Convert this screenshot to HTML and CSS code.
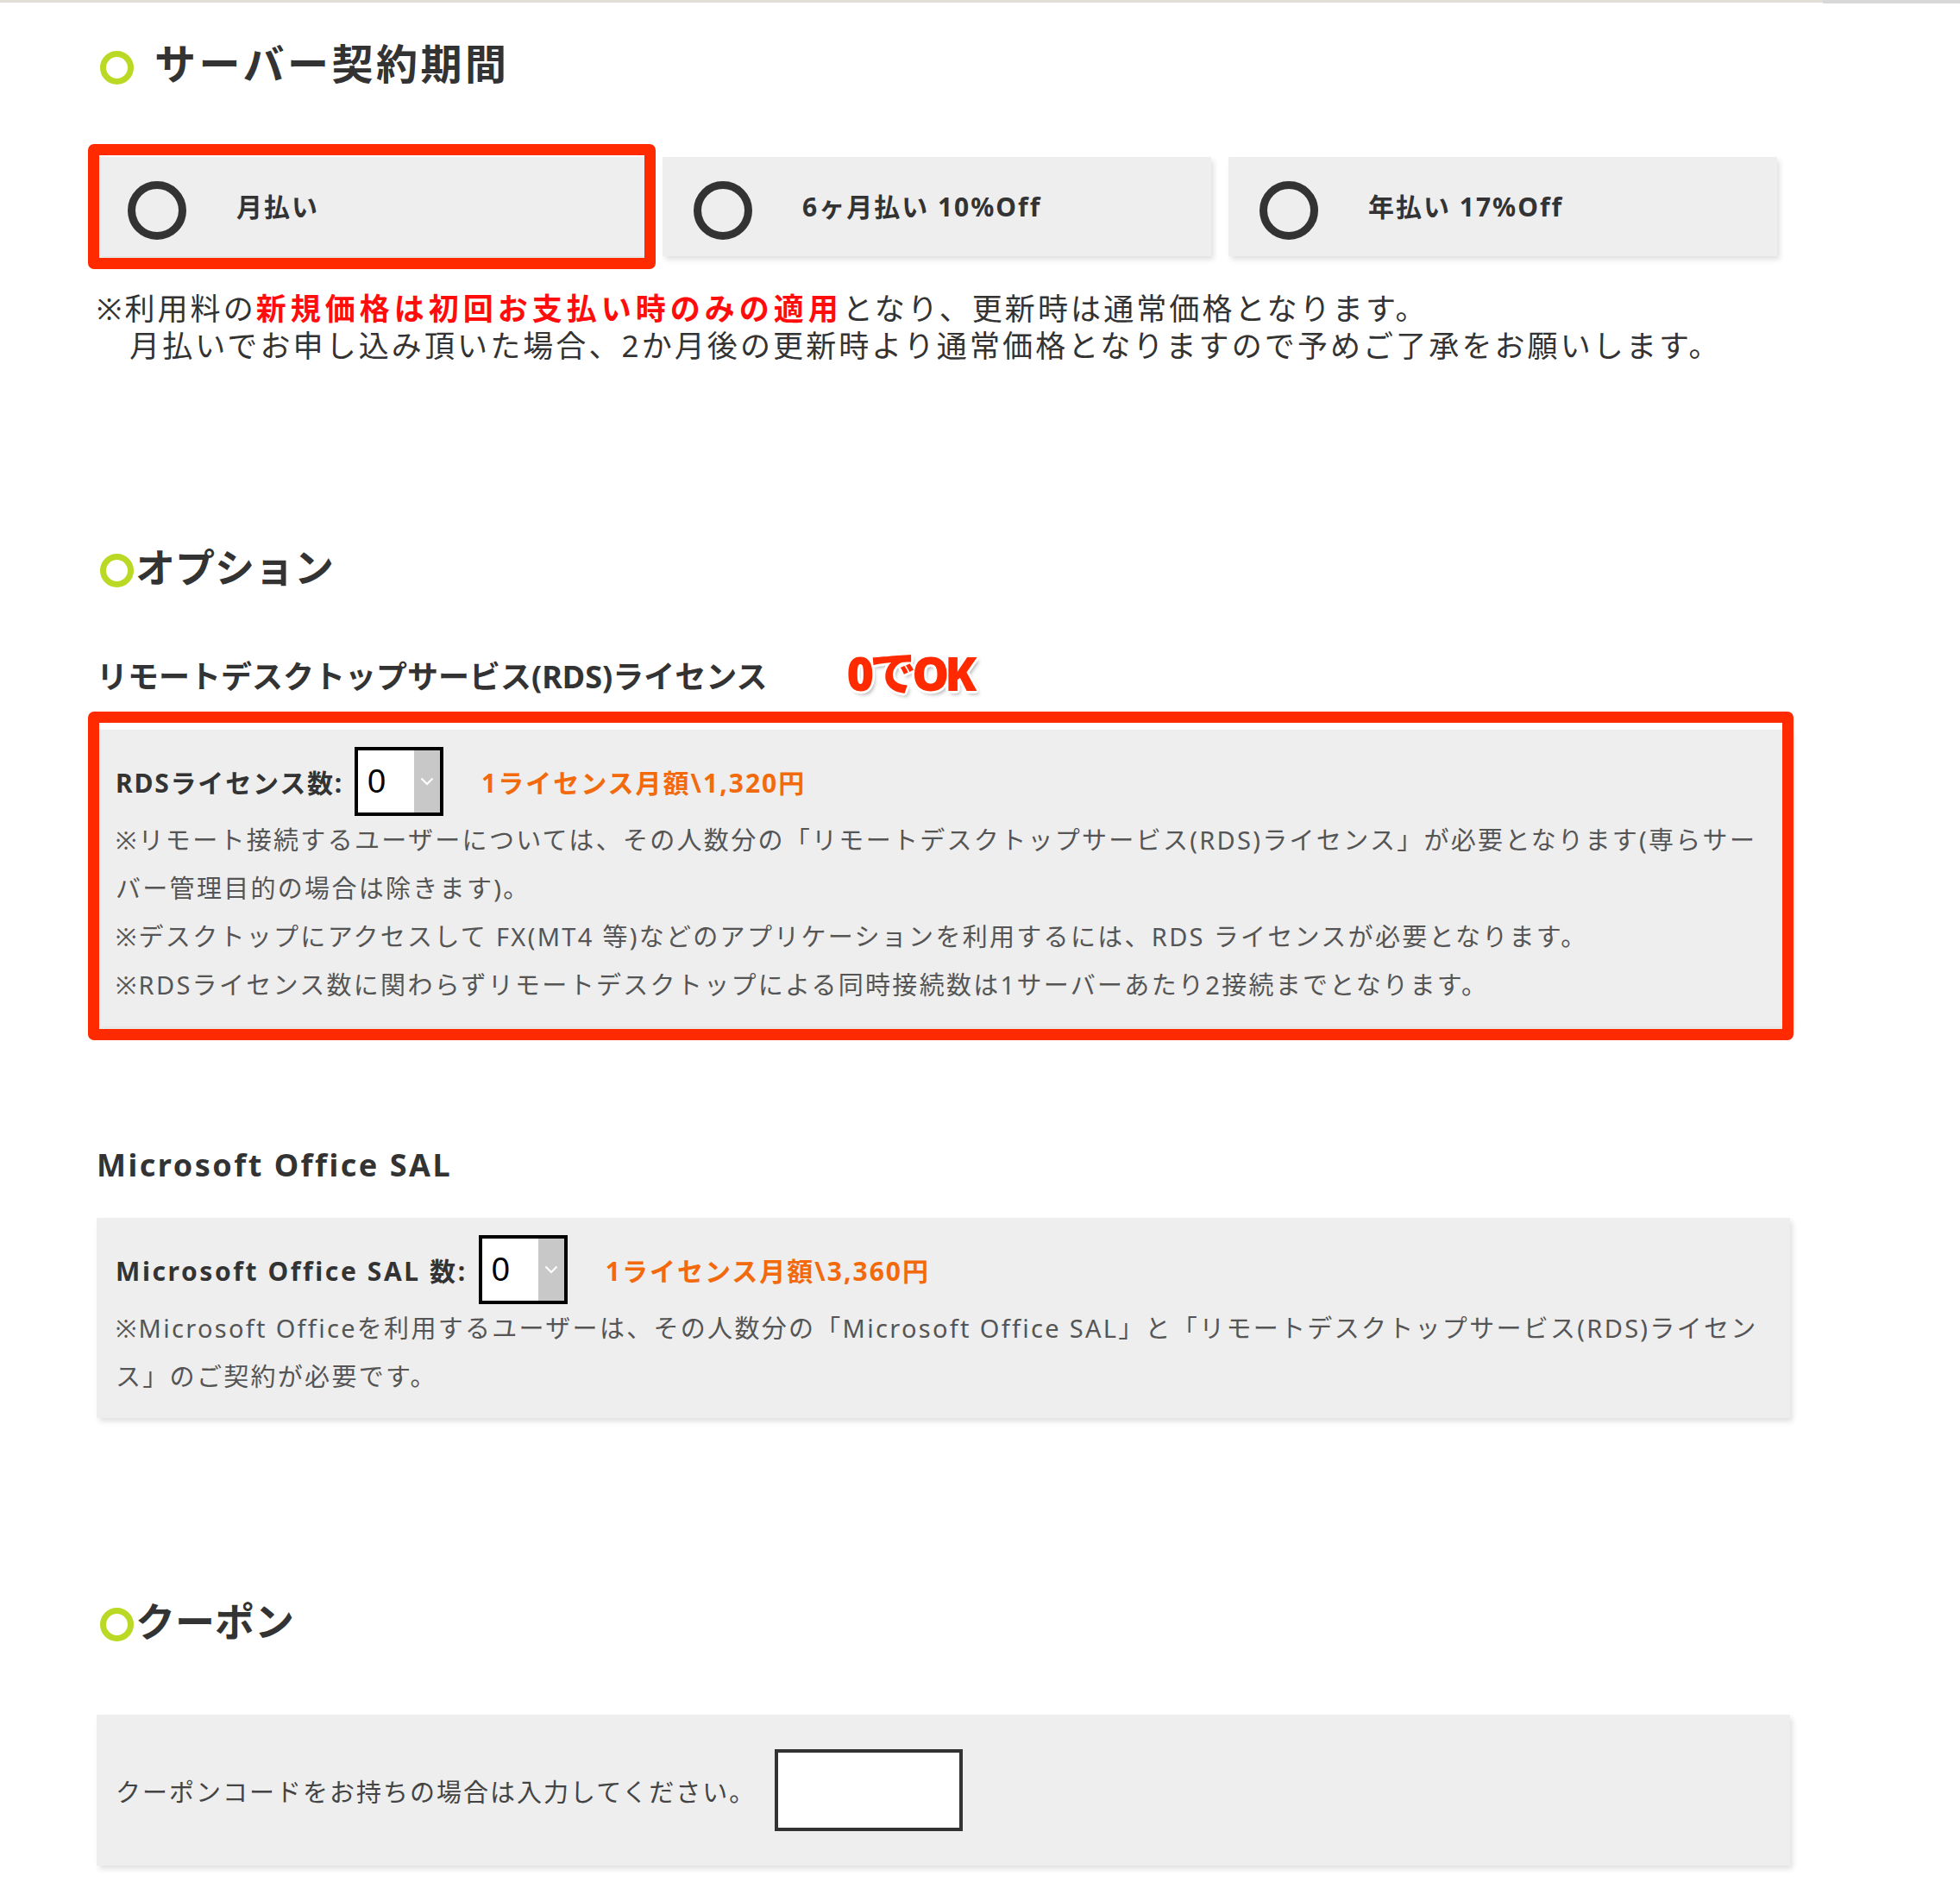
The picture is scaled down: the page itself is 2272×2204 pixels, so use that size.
FILE: index.html
```html
<!DOCTYPE html>
<html lang="ja">
<head>
    <meta charset="UTF-8">
    <meta name="viewport" content="width=device-width, initial-scale=1.0">
    <title>サーバーお申し込み</title>
    <link rel="stylesheet" href="styles.css">
</head>
<body>
    <div class="topbar"><div class="topbar-line"></div><div class="topbar-tab"></div></div>
    <div class="wrap">
        <h2 class="sec-title first"><span class="ring"></span>サーバー契約期間</h2>
        <div class="plans">
            <label class="plan">
                <span class="radio"></span>
                <span class="plan-name">月払い</span>
                <span class="mark mark-plan"></span>
            </label>
            <label class="plan">
                <span class="radio"></span>
                <span class="plan-name">6ヶ月払い 10%Off</span>
            </label>
            <label class="plan">
                <span class="radio"></span>
                <span class="plan-name">年払い 17%Off</span>
            </label>
        </div>
        <p class="notice">※利用料の<strong>新規価格は初回お支払い時のみの適用</strong>となり、更新時は通常価格となります。<br>　月払いでお申し込み頂いた場合、2か月後の更新時より通常価格となりますので予めご了承をお願いします。</p>

        <h2 class="sec-title"><span class="ring"></span>オプション</h2>
        <div class="opt-head">
            <h3 class="opt-title">リモートデスクトップサービス(RDS)ライセンス</h3>
            <span class="ok-note">0でOK</span>
        </div>
        <div class="opt-box">
            <div class="opt-row">
                <span class="opt-label">RDSライセンス数:</span>
                <div class="num-select">
                    <select><option>0</option><option>1</option><option>2</option></select>
                    <span class="num-arrow"><svg width="16" height="10" viewBox="0 0 16 10"><polyline points="1.5,1.5 8,8 14.5,1.5" fill="none" stroke="#fff" stroke-width="2.2"/></svg></span>
                </div>
                <span class="opt-price">1ライセンス月額\1,320円</span>
            </div>
            <p class="opt-note">※リモート接続するユーザーについては、その人数分の「リモートデスクトップサービス(RDS)ライセンス」が必要となります(専らサー<br>バー管理目的の場合は除きます)。</p>
            <p class="opt-note">※デスクトップにアクセスして FX(MT4 等)などのアプリケーションを利用するには、RDS ライセンスが必要となります。</p>
            <p class="opt-note">※RDSライセンス数に関わらずリモートデスクトップによる同時接続数は1サーバーあたり2接続までとなります。</p>
            <span class="mark mark-box"></span>
        </div>

        <h3 class="opt-title latin">Microsoft Office SAL</h3>
        <div class="opt-box">
            <div class="opt-row">
                <span class="opt-label wide">Microsoft Office SAL 数:</span>
                <div class="num-select">
                    <select><option>0</option><option>1</option><option>2</option></select>
                    <span class="num-arrow"><svg width="16" height="10" viewBox="0 0 16 10"><polyline points="1.5,1.5 8,8 14.5,1.5" fill="none" stroke="#fff" stroke-width="2.2"/></svg></span>
                </div>
                <span class="opt-price">1ライセンス月額\3,360円</span>
            </div>
            <p class="opt-note">※Microsoft Officeを利用するユーザーは、その人数分の「Microsoft Office SAL」と「リモートデスクトップサービス(RDS)ライセン<br>ス」のご契約が必要です。</p>
        </div>

        <h2 class="sec-title"><span class="ring"></span>クーポン</h2>
        <div class="coupon-box">
            <span class="coupon-text">クーポンコードをお持ちの場合は入力してください。</span>
            <input type="text" class="coupon-input">
        </div>
    </div>
</body>
</html>
```

FILE: styles.css
```css
body {
    margin: 0;
    background-color: #fff;
    color: #333;
    font-family: "Noto Sans", "Noto Sans CJK JP", sans-serif;
}
.topbar {
    display: flex;
    height: 4px;
}
.topbar-line {
    flex: 1;
    height: 3px;
    background-color: #e0ded6;
}
.topbar-tab {
    width: 159px;
    background-color: #d8d8d8;
}
.wrap {
    width: 1963px;
    padding: 0 0 40px 112px;
}

/* section headings */
.sec-title {
    display: flex;
    align-items: center;
    height: 60px;
    margin: 205px 0 0 4px;
    font-size: 46px;
    line-height: 60px;
    font-weight: 700;
    color: #333;
}
.sec-title.first {
    margin-top: 40px;
    font-size: 48px;
    letter-spacing: 3.5px;
}
.ring {
    flex-shrink: 0;
    width: 39px;
    height: 39px;
    box-sizing: border-box;
    border: 7px solid #bad924;
    border-radius: 50%;
    margin: 8px 2px 0 0;
}
.sec-title.first .ring {
    margin-right: 24px;
}

/* contract period */
.plans {
    display: flex;
    gap: 20px;
    margin-top: 78px;
}
.plan {
    position: relative;
    display: flex;
    align-items: center;
    width: 636px;
    height: 115px;
    box-sizing: border-box;
    padding-left: 36px;
    background-color: #eee;
    box-shadow: 3px 4px 6px rgba(0, 0, 0, 0.12);
}
.radio {
    width: 68px;
    height: 68px;
    box-sizing: border-box;
    border: 9px solid #333;
    border-radius: 50%;
    margin: 9px 58px 0 0;
}
.plan-name {
    font-size: 30px;
    font-weight: 700;
    letter-spacing: 2px;
    margin-top: -3px;
}
.notice {
    margin: 39px 0 0;
    font-size: 35px;
    line-height: 43px;
    letter-spacing: 3.1px;
    color: #333;
}
.notice strong {
    color: #ff0d0d;
    font-weight: 700;
    letter-spacing: 5px;
}

/* options */
.opt-head {
    display: flex;
    align-items: center;
    margin-top: 73px;
}
.opt-title {
    margin: 0;
    font-size: 36px;
    line-height: 50px;
    font-weight: 700;
    color: #333;
}
.opt-title.latin {
    margin-top: 136px;
    letter-spacing: 2.5px;
}
.ok-note {
    margin: -10px 0 0 92px;
    font-size: 54px;
    line-height: 50px;
    font-weight: 900;
    letter-spacing: -5px;
    color: #ff2a00;
    text-shadow: 3px 0 0 #fff, -3px 0 0 #fff, 0 3px 0 #fff, 0 -3px 0 #fff,
        2px 2px 0 #fff, -2px 2px 0 #fff, 2px -2px 0 #fff, -2px -2px 0 #fff,
        3px 4px 4px rgba(0, 0, 0, 0.3);
}
.opt-box {
    position: relative;
    margin-top: 36px;
    padding: 20px 22px;
    background-color: #eee;
    box-shadow: 3px 4px 6px rgba(0, 0, 0, 0.12);
}
.opt-row {
    display: flex;
    align-items: center;
    height: 80px;
}
.opt-label {
    font-size: 30px;
    font-weight: 700;
    letter-spacing: 1.8px;
    margin-right: 13px;
}
.opt-label.wide {
    letter-spacing: 2.6px;
}
.num-select {
    display: flex;
    width: 103px;
    height: 80px;
    box-sizing: border-box;
    border: 4px solid #000;
    background-color: #fff;
}
.num-select select {
    flex: 1;
    min-width: 0;
    appearance: none;
    -webkit-appearance: none;
    border: none;
    outline: none;
    background: transparent;
    padding: 0 0 0 11px;
    font-family: "Liberation Sans", sans-serif;
    font-size: 38px;
    color: #000;
}
.num-arrow {
    display: flex;
    align-items: center;
    justify-content: center;
    width: 30px;
    background-color: #c8c8c8;
}
.opt-price {
    margin-left: 44px;
    font-size: 30px;
    font-weight: 700;
    letter-spacing: 2px;
    color: #f26a0c;
}
.opt-note {
    margin: 0;
    font-size: 29px;
    line-height: 56px;
    letter-spacing: 2.3px;
    color: #555;
}

/* red annotation frames */
.mark {
    position: absolute;
    border: 13px solid #ff2a00;
    border-radius: 7px;
    pointer-events: none;
}
.mark-plan {
    top: -15px;
    bottom: -15px;
    left: -10px;
    right: -12px;
}
.mark-box {
    top: -21px;
    bottom: -16px;
    left: -10px;
    right: -4px;
}

/* coupon */
.coupon-box {
    display: flex;
    align-items: center;
    margin-top: 79px;
    padding: 40px 22px;
    background-color: #eee;
    box-shadow: 3px 4px 6px rgba(0, 0, 0, 0.12);
}
.coupon-text {
    font-size: 29px;
    letter-spacing: 2px;
    color: #444;
}
.coupon-input {
    width: 218px;
    height: 95px;
    box-sizing: border-box;
    margin-left: 22px;
    border: 4px solid #333;
    background-color: #fff;
}
```
